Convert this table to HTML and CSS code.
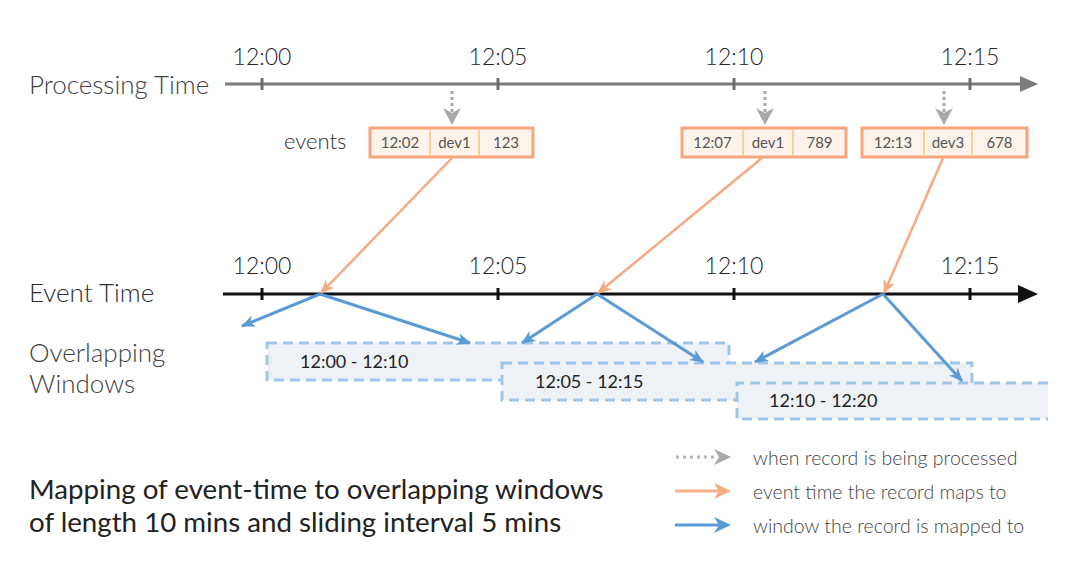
FILE: index.html
```html
<!DOCTYPE html>
<html lang="en">
<head>
<meta charset="utf-8">
<title>Overlapping windows</title>
<link rel="stylesheet" href="styles.css">
</head>
<body>
<div class="page">
  <svg class="diagram" width="1080" height="440" viewBox="0 0 1080 440" xmlns="http://www.w3.org/2000/svg">
    <defs>
      <marker id="mBlue" viewBox="0 0 14 12" refX="13" refY="6" markerWidth="14" markerHeight="12" markerUnits="userSpaceOnUse" orient="auto">
        <path class="head-blue" d="M0,0 L14,6 L0,12 L4,6 Z"/>
      </marker>
      <marker id="mOrange" viewBox="0 0 14 12" refX="13" refY="6" markerWidth="14" markerHeight="12" markerUnits="userSpaceOnUse" orient="auto">
        <path class="head-orange" d="M0,0 L14,6 L0,12 L4,6 Z"/>
      </marker>
    </defs>

    <!-- Processing time axis -->
    <text class="side-label" x="29" y="94">Processing Time</text>
    <line class="axis-gray" x1="225" y1="84" x2="1024" y2="84"/>
    <path class="tri-gray" d="M1020,76 L1038,84 L1020,92 Z"/>
    <line class="tick-gray" x1="262" y1="78" x2="262" y2="90"/>
    <line class="tick-gray" x1="498" y1="78" x2="498" y2="90"/>
    <line class="tick-gray" x1="734" y1="78" x2="734" y2="90"/>
    <line class="tick-gray" x1="970" y1="78" x2="970" y2="90"/>
    <text class="time-label" x="262" y="65">12:00</text>
    <text class="time-label" x="498" y="65">12:05</text>
    <text class="time-label" x="734" y="65">12:10</text>
    <text class="time-label" x="970" y="65">12:15</text>

    <!-- processing arrows -->
    <line class="dots" x1="452" y1="91" x2="452" y2="112"/>
    <path class="head-gray" d="M443,108 L452,125 L461,108 L452,113 Z"/>
    <line class="dots" x1="765" y1="91" x2="765" y2="112"/>
    <path class="head-gray" d="M756,108 L765,125 L774,108 L765,113 Z"/>
    <line class="dots" x1="944" y1="91" x2="944" y2="112"/>
    <path class="head-gray" d="M935,108 L944,125 L953,108 L944,113 Z"/>

    <!-- events -->
    <text class="events-label" x="284" y="149">events</text>

    <rect class="ev-box" x="370" y="128" width="163" height="29"/>
    <line class="ev-div" x1="430" y1="129.5" x2="430" y2="155.5"/>
    <line class="ev-div" x1="479" y1="129.5" x2="479" y2="155.5"/>
    <text class="ev-text" x="400" y="148">12:02</text>
    <text class="ev-text" x="454.5" y="148">dev1</text>
    <text class="ev-text" x="506" y="148">123</text>

    <rect class="ev-box" x="682" y="128" width="164" height="29"/>
    <line class="ev-div" x1="743" y1="129.5" x2="743" y2="155.5"/>
    <line class="ev-div" x1="793" y1="129.5" x2="793" y2="155.5"/>
    <text class="ev-text" x="712.5" y="148">12:07</text>
    <text class="ev-text" x="768" y="148">dev1</text>
    <text class="ev-text" x="819.5" y="148">789</text>

    <rect class="ev-box" x="862" y="128" width="165" height="29"/>
    <line class="ev-div" x1="924" y1="129.5" x2="924" y2="155.5"/>
    <line class="ev-div" x1="972" y1="129.5" x2="972" y2="155.5"/>
    <text class="ev-text" x="893" y="148">12:13</text>
    <text class="ev-text" x="948" y="148">dev3</text>
    <text class="ev-text" x="999.5" y="148">678</text>

    <!-- Event time axis -->
    <text class="side-label dark" x="29" y="302">Event Time</text>
    <line class="axis-black" x1="223" y1="294" x2="1022" y2="294"/>
    <path class="tri-black" d="M1018,285 L1038,294 L1018,303 Z"/>
    <line class="tick-black" x1="262" y1="288" x2="262" y2="300"/>
    <line class="tick-black" x1="498" y1="288" x2="498" y2="300"/>
    <line class="tick-black" x1="734" y1="288" x2="734" y2="300"/>
    <line class="tick-black" x1="970" y1="288" x2="970" y2="300"/>
    <text class="time-label" x="262" y="274">12:00</text>
    <text class="time-label" x="498" y="274">12:05</text>
    <text class="time-label" x="734" y="274">12:10</text>
    <text class="time-label" x="970" y="274">12:15</text>

    <!-- windows -->
    <text class="side-label" x="29" y="362">Overlapping</text>
    <text class="side-label" x="29" y="393">Windows</text>

    <rect class="win" x="267" y="343" width="462" height="37"/>
    <text class="win-text" x="300" y="368">12:00 - 12:10</text>

    <rect class="win" x="502" y="363" width="470" height="37"/>
    <text class="win-text" x="535" y="388">12:05 - 12:15</text>

    <rect class="win-fill" x="737" y="383" width="311" height="36"/>
    <path class="win-edge" d="M1048,383 H737 V419 H1048"/>
    <text class="win-text" x="769" y="407">12:10 - 12:20</text>

    <!-- orange mapping arrows -->
    <line class="arr-orange" x1="452" y1="158" x2="321" y2="293"/>
    <line class="arr-orange" x1="762" y1="158" x2="598" y2="293"/>
    <line class="arr-orange" x1="943" y1="158" x2="884" y2="293"/>

    <!-- blue window arrows -->
    <line class="arr-blue" x1="320" y1="294" x2="242" y2="326"/>
    <line class="arr-blue" x1="320" y1="294" x2="470" y2="343"/>
    <line class="arr-blue" x1="597" y1="294" x2="522" y2="343"/>
    <line class="arr-blue" x1="597" y1="294" x2="703" y2="362"/>
    <line class="arr-blue" x1="883" y1="294" x2="755" y2="362"/>
    <line class="arr-blue" x1="883" y1="294" x2="962" y2="381"/>
  </svg>

  <footer class="footer">
    <p class="caption">Mapping of event-time to overlapping windows<br>of length 10 mins and sliding interval 5 mins</p>
    <ul class="legend">
      <li class="legend-row">
        <svg class="legend-icon" width="58" height="20" viewBox="0 0 58 20">
          <line class="dots-legend" x1="1" y1="10" x2="40" y2="10"/>
          <path class="head-gray" d="M39,2 L56,10 L39,18 L44,10 Z"/>
        </svg>
        <span>when record is being processed</span>
      </li>
      <li class="legend-row">
        <svg class="legend-icon" width="58" height="20" viewBox="0 0 58 20">
          <line class="legend-orange" x1="0" y1="10" x2="50" y2="10"/>
          <path class="head-orange" d="M39,2 L56,10 L39,18 L44,10 Z"/>
        </svg>
        <span>event time the record maps to</span>
      </li>
      <li class="legend-row">
        <svg class="legend-icon" width="58" height="20" viewBox="0 0 58 20">
          <line class="legend-blue" x1="0" y1="10" x2="50" y2="10"/>
          <path class="head-blue" d="M39,2 L56,10 L39,18 L44,10 Z"/>
        </svg>
        <span>window the record is mapped to</span>
      </li>
    </ul>
  </footer>
</div>
</body>
</html>
```

FILE: styles.css
```css
html, body {
  margin: 0;
  padding: 0;
  background: #ffffff;
}

.page {
  width: 1080px;
  height: 562px;
  overflow: hidden;
  font-family: Lato, "Noto Sans", "Liberation Sans", sans-serif;
  background: #ffffff;
}

.diagram {
  display: block;
}

/* texts in diagram */
.side-label {
  font-family: Lato, "Noto Sans", sans-serif;
  font-size: 26px;
  font-weight: 300;
  fill: #3f3f3f;
}
.side-label.dark {
  fill: #2e2e2e;
}
.time-label {
  font-family: Lato, "Noto Sans", sans-serif;
  font-size: 23px;
  font-weight: 300;
  fill: #262626;
  text-anchor: middle;
}
.events-label {
  font-family: Lato, "Noto Sans", sans-serif;
  font-size: 22px;
  font-weight: 300;
  fill: #2e2e2e;
}
.ev-text {
  font-family: Lato, "Noto Sans", sans-serif;
  font-size: 15px;
  fill: #555555;
  text-anchor: middle;
}
.win-text {
  font-family: Lato, "Noto Sans", sans-serif;
  font-size: 18px;
  fill: #222222;
}

/* axes */
.axis-gray {
  stroke: #7b7b7b;
  stroke-width: 3;
}
.tick-gray {
  stroke: #6f6f6f;
  stroke-width: 3;
}
.tri-gray {
  fill: #7b7b7b;
}
.axis-black {
  stroke: #111111;
  stroke-width: 3;
}
.tick-black {
  stroke: #111111;
  stroke-width: 3;
}
.tri-black {
  fill: #111111;
}

/* processing arrows */
.dots {
  stroke: #a7a9ab;
  stroke-width: 3;
  stroke-dasharray: 3 3;
}
.head-gray {
  fill: #a9a9a9;
}

/* event boxes */
.ev-box {
  fill: #fdf3ea;
  stroke: #f4a77c;
  stroke-width: 3;
}
.ev-div {
  stroke: #f6c57c;
  stroke-width: 1.5;
}

/* windows */
.win {
  fill: #eef2f6;
  stroke: #9fc6ea;
  stroke-width: 3;
  stroke-dasharray: 10 6;
}
.win-fill {
  fill: #eef2f6;
}
.win-edge {
  fill: none;
  stroke: #9fc6ea;
  stroke-width: 3;
  stroke-dasharray: 10 6;
}

/* mapping arrows */
.arr-orange {
  stroke: #f4ab82;
  stroke-width: 2.5;
  marker-end: url(#mOrange);
}
.head-orange {
  fill: #f4ab82;
}
.arr-blue {
  stroke: #5b9bd5;
  stroke-width: 3;
  marker-end: url(#mBlue);
}
.head-blue {
  fill: #5b9bd5;
}

/* footer */
.footer {
  display: flex;
  justify-content: space-between;
  align-items: flex-start;
  padding: 0 0 0 29px;
  height: 122px;
}
.caption {
  margin: 32px 0 0 0;
  font-size: 27.7px;
  line-height: 33px;
  color: #222222;
  width: 640px;
}
.legend {
  list-style: none;
  margin: 0;
  padding: 0;
  width: 405px;
}
.legend-row {
  display: flex;
  align-items: center;
  gap: 20px;
  height: 34px;
  font-size: 19.5px;
  font-weight: 300;
  color: #444444;
}
.legend-icon {
  display: block;
  flex: none;
}
.dots-legend {
  stroke: #a9b8c2;
  stroke-width: 3;
  stroke-dasharray: 3 4;
}
.legend-orange {
  stroke: #f4b08a;
  stroke-width: 3;
}
.legend-blue {
  stroke: #5b9bd5;
  stroke-width: 3;
}
```
